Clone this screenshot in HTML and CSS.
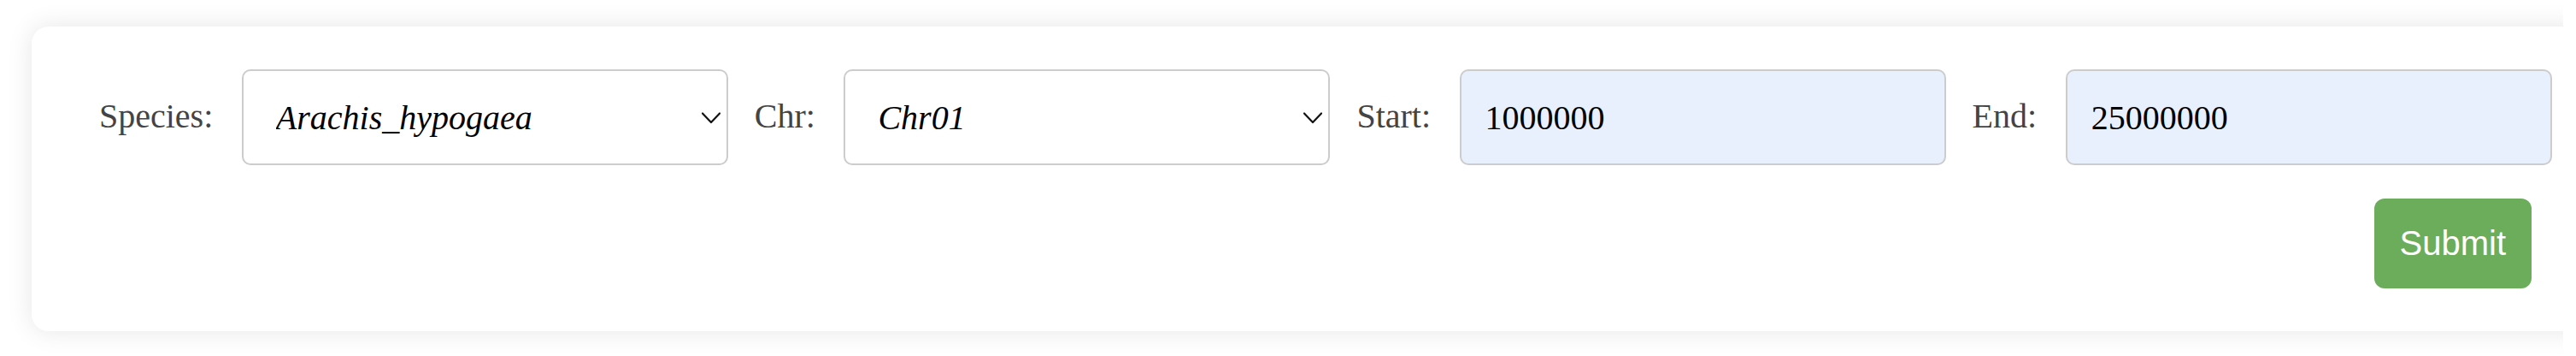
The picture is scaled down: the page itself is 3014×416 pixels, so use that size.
FILE: index.html
```html
<!DOCTYPE html>
<html lang="en">
<head>
<meta charset="utf-8">
<title>Region query</title>
<link rel="stylesheet" href="styles.css">
</head>
<body>
<div class="viewport">
  <form class="card">
    <div class="row">
      <label class="lbl" for="species">Species:</label>
      <div class="select-wrap">
        <select id="species" class="field sel">
          <option>Arachis_hypogaea</option>
        </select>
        <svg class="chev" width="22" height="14" viewBox="0 0 22 14" aria-hidden="true"><path d="M1 1.5 L11 12 L21 1.5" fill="none" stroke="#111" stroke-width="2.2" stroke-linecap="round" stroke-linejoin="round"/></svg>
      </div>
      <label class="lbl" for="chr">Chr:</label>
      <div class="select-wrap">
        <select id="chr" class="field sel">
          <option>Chr01</option>
        </select>
        <svg class="chev" width="22" height="14" viewBox="0 0 22 14" aria-hidden="true"><path d="M1 1.5 L11 12 L21 1.5" fill="none" stroke="#111" stroke-width="2.2" stroke-linecap="round" stroke-linejoin="round"/></svg>
      </div>
      <label class="lbl" for="start">Start:</label>
      <input id="start" class="field inp" type="text" value="1000000">
      <label class="lbl" for="end">End:</label>
      <input id="end" class="field inp" type="text" value="25000000">
    </div>
    <div class="actions">
      <button type="button" class="submit">Submit</button>
    </div>
  </form>
</div>
</body>
</html>
```

FILE: styles.css
```css
html, body {
  margin: 0;
  padding: 0;
  background: #ffffff;
  overflow: hidden;
}

.viewport {
  width: 2999px;
  height: 416px;
  box-sizing: border-box;
  padding: 31px 0 29px 0;
  overflow: hidden;
}

.card {
  box-sizing: border-box;
  width: 3000px;
  margin: 0 0 0 37px;
  padding: 50px 75px 50px 79px;
  background: #ffffff;
  border-radius: 20px;
  box-shadow: 0 0 30px rgba(0, 0, 0, 0.1);
}

.row {
  display: flex;
  align-items: center;
  height: 112px;
}

.lbl {
  flex-shrink: 0;
  font-family: "Liberation Serif", "Times New Roman", serif;
  font-size: 40px;
  color: #444444;
  margin-right: 33.5px;
  padding-bottom: 4px;
}

.select-wrap {
  position: relative;
  flex-shrink: 0;
  width: 569px;
  height: 112px;
  margin-right: 31px;
}

.field {
  box-sizing: border-box;
  width: 569px;
  height: 112px;
  border: 2px solid #cccccc;
  border-radius: 10px;
  font-family: "Liberation Serif", "Times New Roman", serif;
  font-size: 40px;
  color: #000000;
  outline: none;
  margin: 0;
}

.sel {
  appearance: none;
  -webkit-appearance: none;
  background: #ffffff;
  font-style: italic;
  padding: 0 40px 0 38px;
}

.chev {
  position: absolute;
  top: 50px;
  right: 9px;
  pointer-events: none;
}

.inp {
  flex-shrink: 0;
  background: #e8f0fe;
  padding: 0 20px 0 28px;
  margin-right: 31px;
}

.actions {
  display: flex;
  justify-content: flex-end;
  margin-top: 39px;
}

.submit {
  box-sizing: border-box;
  height: 105px;
  padding: 0 30px;
  border: none;
  border-radius: 12px;
  background: #6cad5c;
  color: #ffffff;
  font-family: "Liberation Sans", Arial, sans-serif;
  font-size: 40px;
  cursor: pointer;
}
```
